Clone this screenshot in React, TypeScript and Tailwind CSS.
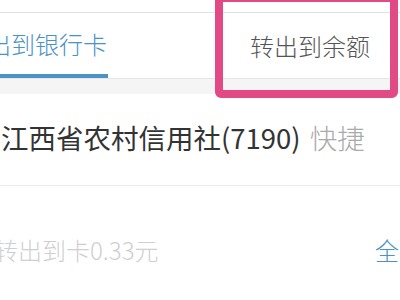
import React from 'react';

const font = { fontFamily: '"Noto Sans CJK SC", "Noto Sans", sans-serif' };

export default function App() {
  return (
    <div className="relative w-[400px] h-[300px] overflow-hidden bg-white" style={font}>
      {/* status strip */}
      <div className="h-[13px] bg-white border-b border-[#e2e2e2]" />

      {/* tabs */}
      <div className="flex h-[66px] border-b border-[#e6e6e6]">
        <div className="w-[215px] flex flex-col">
          <div className="flex-1 flex items-center">
            <span className="-ml-[37px] text-[24px] leading-none font-light text-[#4b92c6] whitespace-nowrap">转出到银行卡</span>
          </div>
          <div className="h-[4px] w-[108px] bg-[#4b92c6]" />
        </div>
        <div className="flex-1 flex items-center pl-[35px]">
          <span className="text-[24px] leading-none font-light text-[#555] whitespace-nowrap">转出到余额</span>
        </div>
      </div>
      <div className="h-[15px] bg-[#f5f5f5]" />

      {/* bank card row */}
      <div className="h-[92px] flex items-center pl-[1px] pb-[4px] border-b border-[#ececec]">
        <span className="text-[27.5px] leading-none text-[#333] whitespace-nowrap">江西省农村信用社(7190)</span>
        <span className="ml-[9px] text-[27.5px] leading-none font-light text-[#aaa] whitespace-nowrap">快捷</span>
      </div>

      {/* amount row */}
      <div className="h-[130px] flex items-start pt-[52px]">
        <span className="-ml-[6px] text-[24px] leading-none font-light text-[#cfcfcf] whitespace-nowrap">转出到卡0.33元</span>
        <span className="ml-auto -mr-[71px] text-[24px] leading-none font-light text-[#4b92c6] whitespace-nowrap">全部转出</span>
      </div>

      {/* highlight box */}
      <div className="absolute left-[215px] top-[-6px] w-[183px] h-[104px] border-[8px] border-[#e24a86] rounded-[6px]" />
    </div>
  );
}
